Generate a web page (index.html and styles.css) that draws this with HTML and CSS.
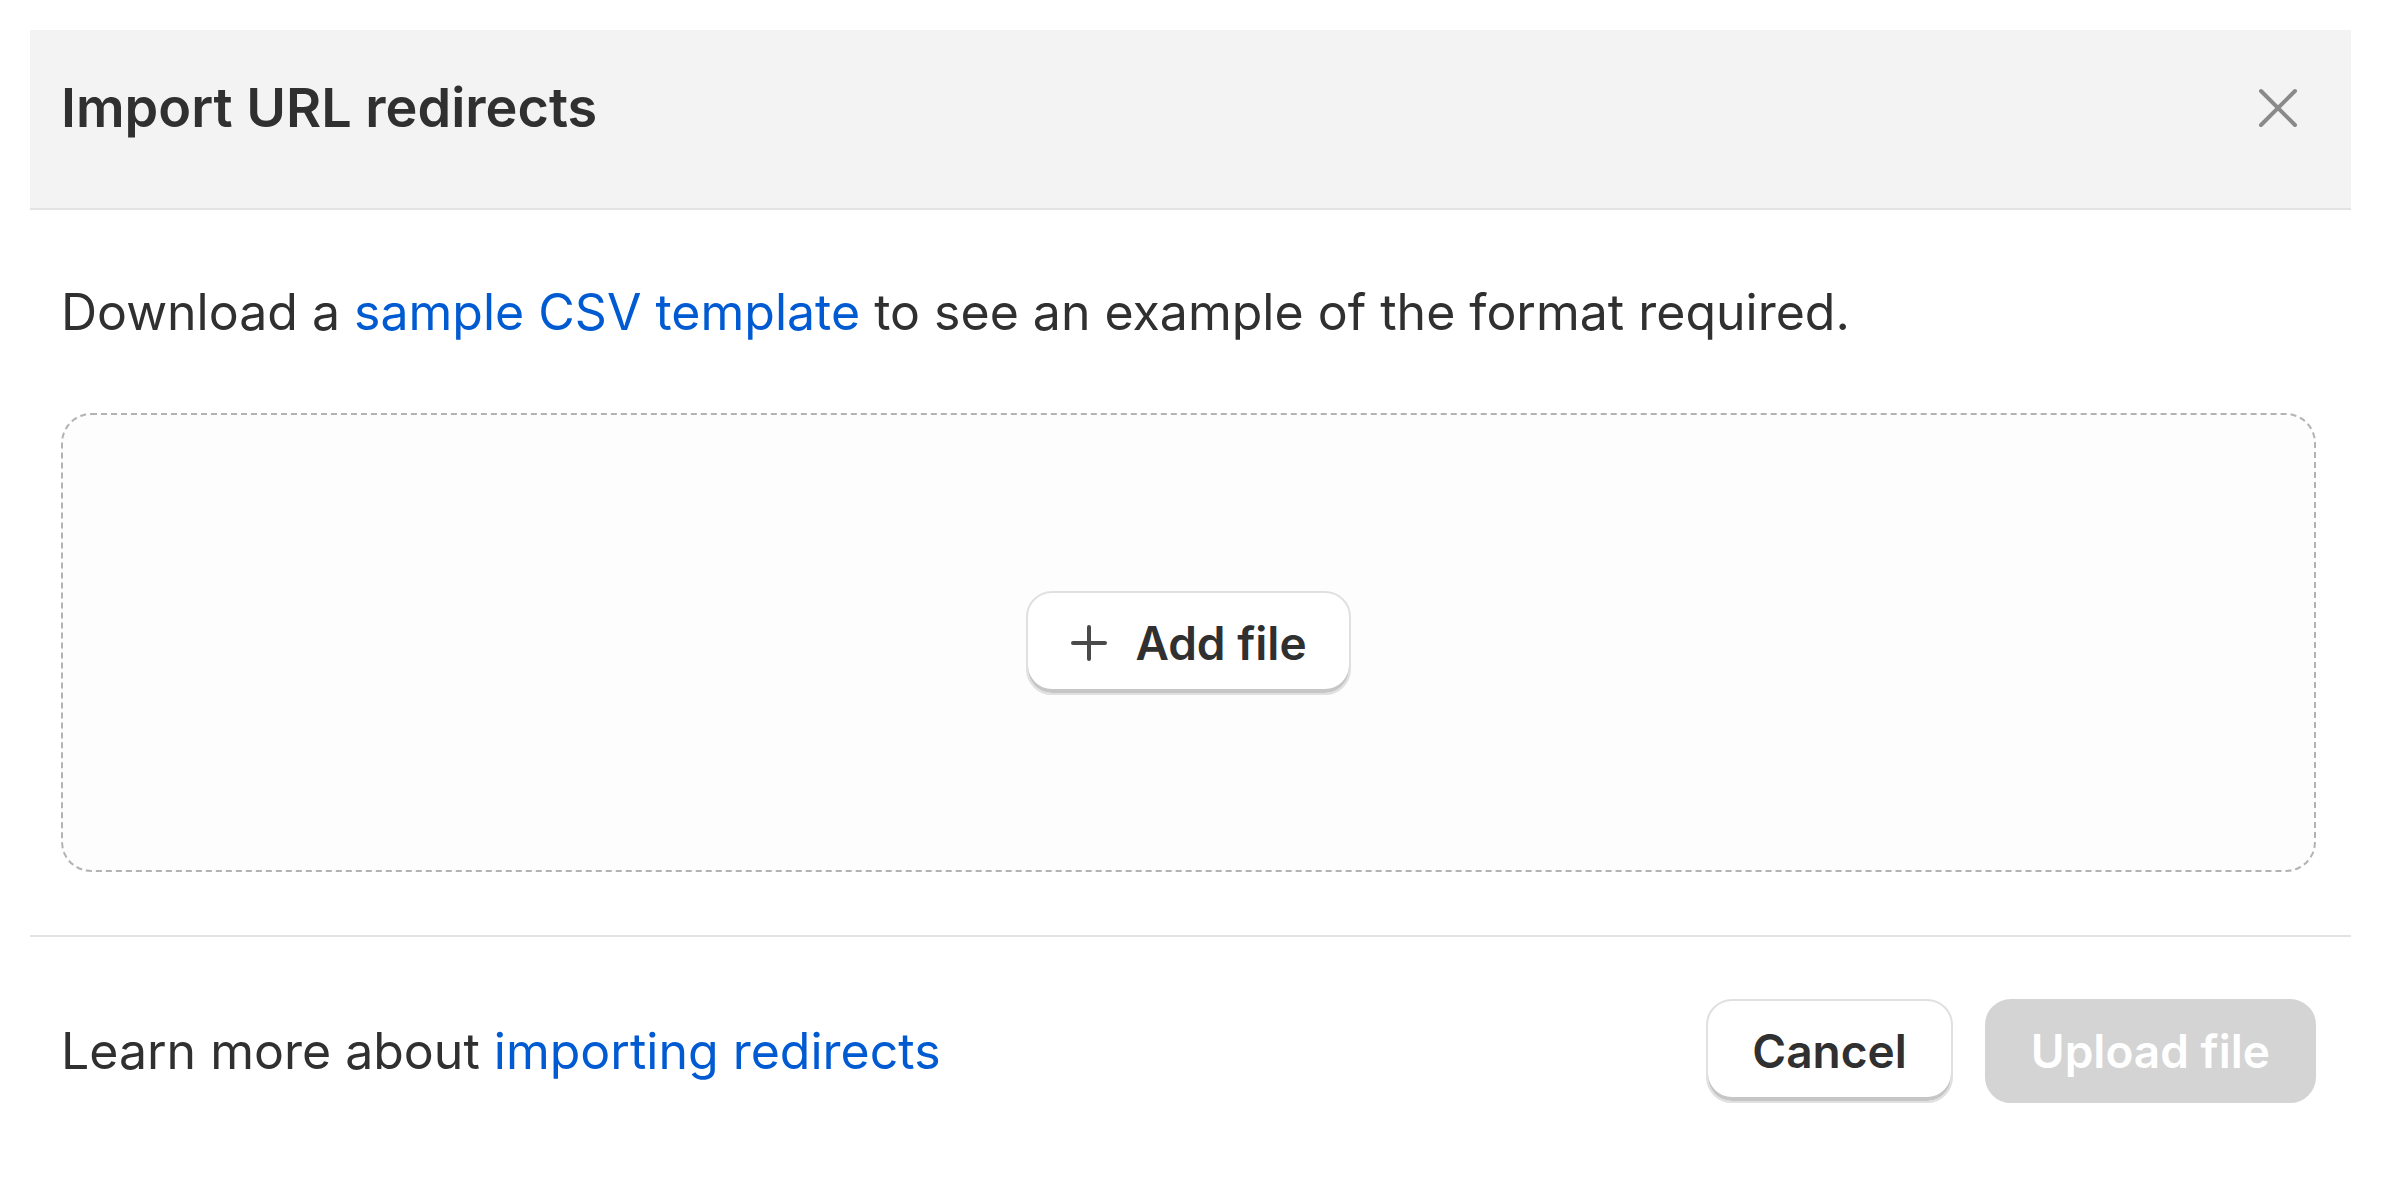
FILE: index.html
```html
<!DOCTYPE html>
<html lang="en">
<head>
<meta charset="UTF-8">
<meta name="viewport" content="width=device-width, initial-scale=1.0">
<title>Import URL redirects</title>
<link rel="stylesheet" href="styles.css">
</head>
<body>
    <div class="modal">
        <div class="modal-header">
            <h2>Import URL redirects</h2>
            <button type="button" class="close" aria-label="Close">
                <svg width="40" height="40" viewBox="0 0 40 40">
                    <path d="M3 3 L37 37 M37 3 L3 37" stroke="#8a8a8a" stroke-width="4" stroke-linecap="round" fill="none"/>
                </svg>
            </button>
        </div>

        <div class="modal-body">
            <p>Download a <a href="#">sample CSV template</a> to see an example of the format required.</p>

            <div class="dropzone">
                <button type="button" class="btn">
                    <svg width="38" height="38" viewBox="0 0 38 38">
                        <path d="M19 3 V35 M3 19 H35" stroke="#4a4a4a" stroke-width="4" stroke-linecap="round" fill="none"/>
                    </svg>
                    Add file
                </button>
            </div>
        </div>

        <div class="modal-footer">
            <p>Learn more about <a href="#">importing redirects</a></p>
            <div class="actions">
                <button type="button" class="btn">Cancel</button>
                <button type="button" class="btn btn-disabled" disabled>Upload file</button>
            </div>
        </div>
    </div>
</body>
</html>
```

FILE: styles.css
```css
body {
    font-family: Inter, "Noto Sans", sans-serif;
    margin: 0;
    padding: 0;
    background-color: #fff;
    color: #303030;
}
.modal {
    margin: 30px;
    width: 2321px;
    background-color: #fff;
}
.modal-header {
    display: flex;
    justify-content: space-between;
    align-items: flex-start;
    padding: 38px 53px 60px 31px;
    background-color: #f3f3f3;
    border-bottom: 2px solid #e3e3e3;
}
h2 {
    margin: 0;
    font-size: 54px;
    line-height: 80px;
    font-weight: 600;
}
.close {
    display: flex;
    align-items: center;
    height: 80px;
    padding: 0;
    border: none;
    background: none;
    cursor: pointer;
}
.modal-body {
    padding: 66px 35px 63px 31px;
}
p {
    margin: 0;
    font-size: 50px;
    line-height: 72px;
}
a {
    color: #005bd3;
    text-decoration: none;
}
.dropzone {
    display: flex;
    justify-content: center;
    align-items: center;
    height: 455px;
    margin-top: 65px;
    border: 2px dashed #b3b3b3;
    border-radius: 30px;
    background-color: #fdfdfd;
}
.btn {
    display: flex;
    align-items: center;
    gap: 27px;
    padding: 22px 44px;
    font-family: Inter, "Noto Sans", sans-serif;
    font-size: 46px;
    line-height: 56px;
    font-weight: 600;
    color: #303030;
    background-color: #fff;
    border: 2px solid #e0e0e0;
    border-radius: 26px;
    box-shadow: inset 0 -4px 0 #c6c6c6;
    cursor: pointer;
}
.dropzone .btn {
    padding: 22px 42px;
}
.modal-footer {
    display: flex;
    justify-content: space-between;
    align-items: center;
    padding: 62px 35px 58px 31px;
    border-top: 2px solid #e3e3e3;
}
.actions {
    display: flex;
    gap: 32px;
}
.btn-disabled {
    color: #fff;
    background-color: #d4d4d4;
    border-color: #d4d4d4;
    box-shadow: none;
    cursor: default;
}
```
